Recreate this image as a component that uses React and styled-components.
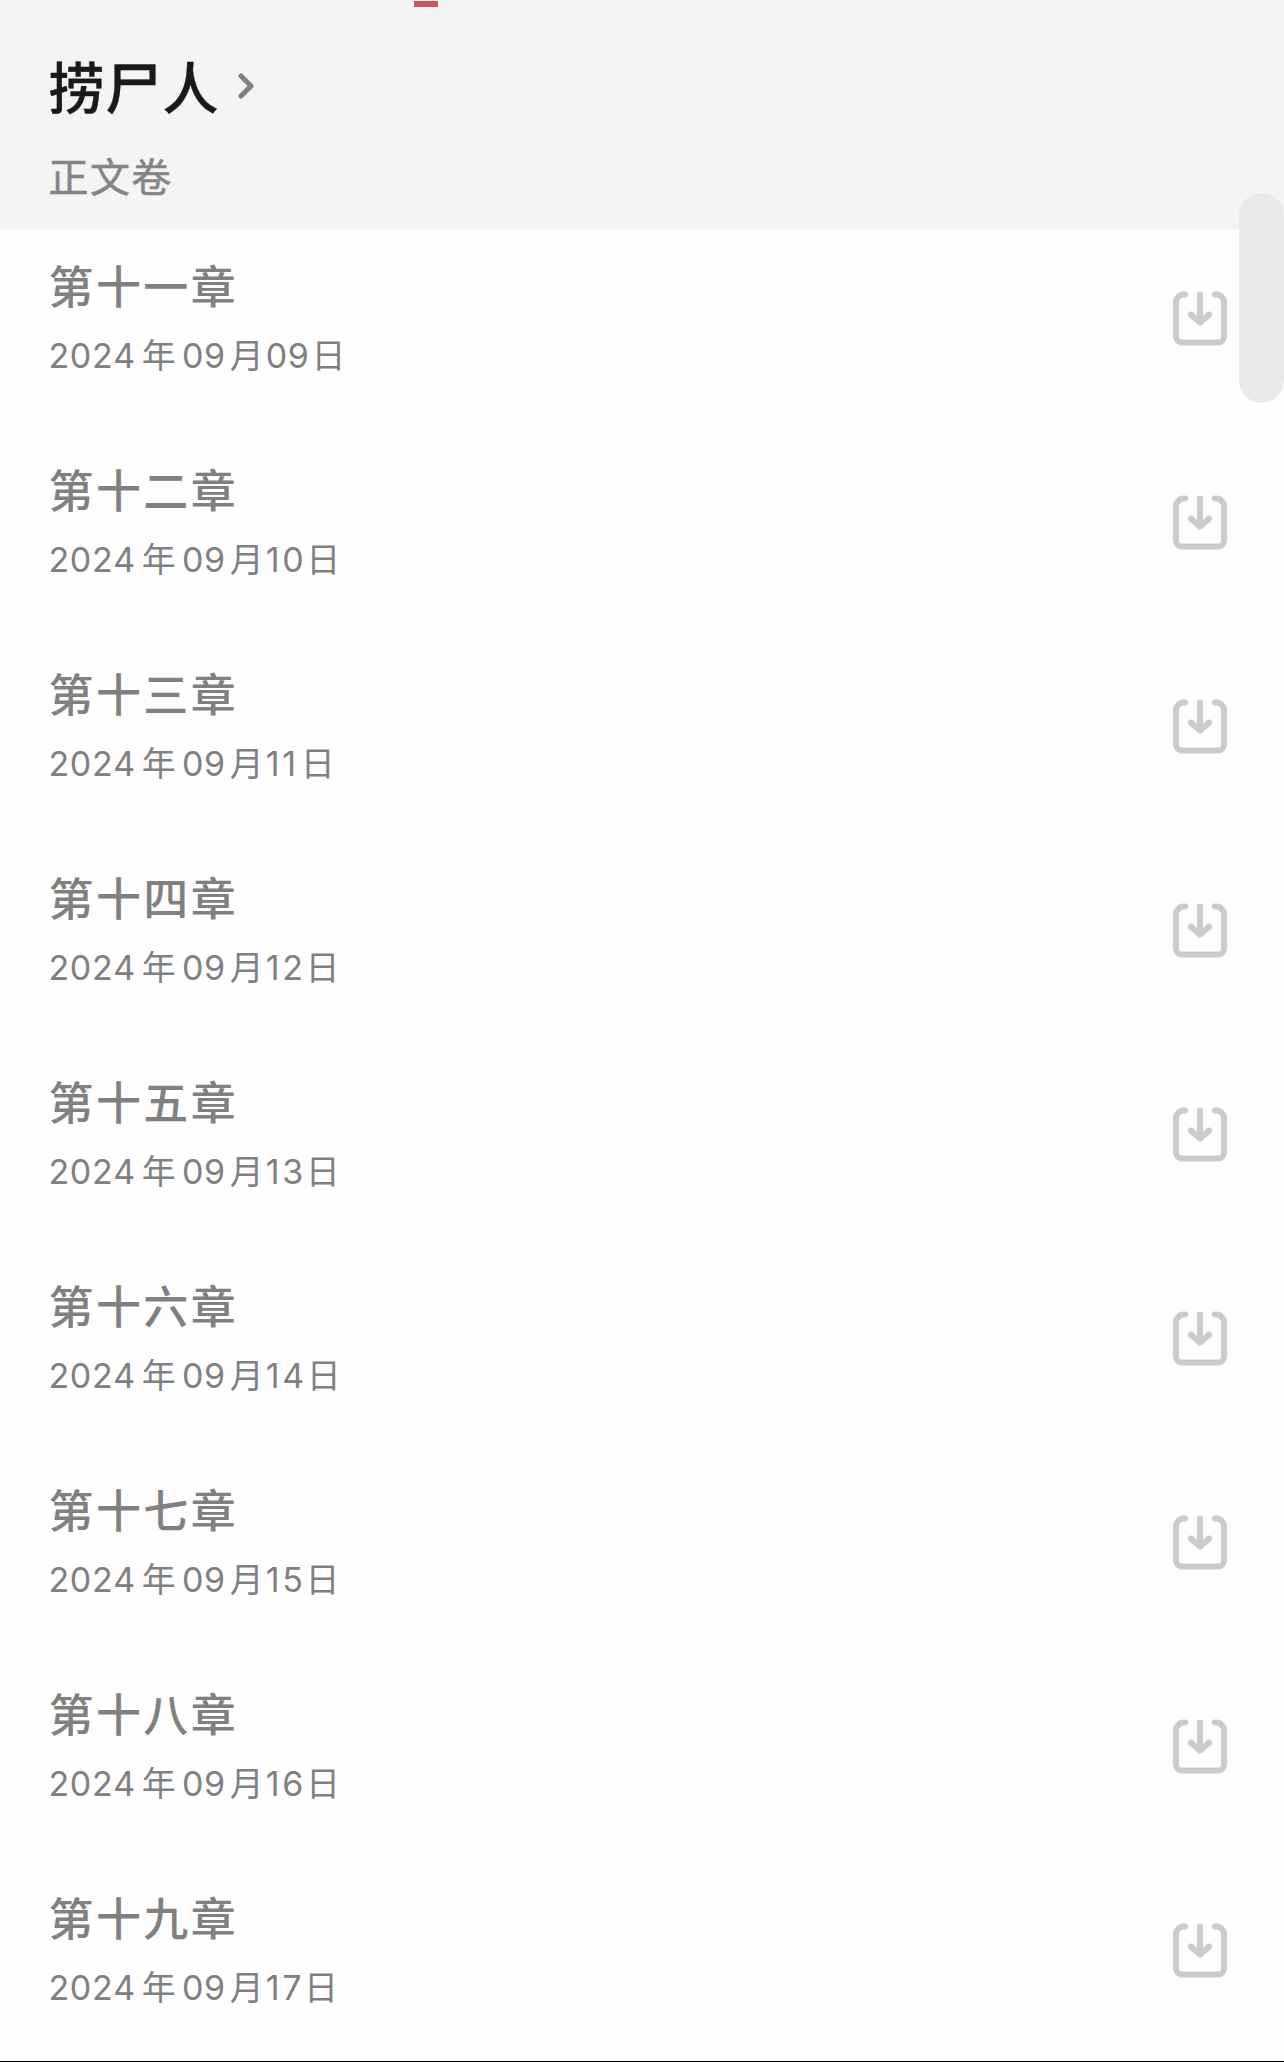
import * as React from 'react';
import styled, { createGlobalStyle } from 'styled-components';

const GlobalStyle = createGlobalStyle`
  * {
    box-sizing: border-box;
  }
  body {
    margin: 0;
    background: #fefefe;
    font-family: Inter, 'Noto Sans CJK SC', sans-serif;
  }
`;

const Page = styled.main`
  position: relative;
  height: 2062px;
  overflow: hidden;
  border-bottom: 1px solid #000;
`;

const Header = styled.header`
  height: 229px;
  padding: 1px 48.5px 0;
  background: #f4f4f4;
`;

const Marker = styled.div`
  width: 24px;
  height: 6px;
  margin-left: 365.5px;
  background: #c9565a;
`;

const BookLink = styled.div`
  display: flex;
  align-items: center;
  height: 80px;
  margin-top: 38px;
  color: #808080;
`;

const BookTitle = styled.h1`
  margin: 0;
  color: #191919;
  font-family: 'Noto Sans CJK SC', sans-serif;
  font-size: 56px;
  font-weight: 500;
  line-height: 80px;
  letter-spacing: 1px;
  -webkit-text-stroke: 0.4px currentColor;
`;

const Chevron = styled.svg`
  display: block;
  width: 16px;
  height: 26px;
  margin: 1px 0 0 18.5px;
`;

const Volume = styled.h2`
  margin: 21px 0 0;
  color: #858585;
  font-family: 'Noto Sans CJK SC', sans-serif;
  font-size: 40px;
  font-weight: 400;
  line-height: 58px;
  letter-spacing: 1.4px;
  -webkit-text-stroke: 0.5px currentColor;
`;

const ChapterList = styled.ul`
  margin: 0;
  padding: 0;
  list-style: none;
`;

const Chapter = styled.li`
  display: flex;
  justify-content: space-between;
  height: 204px;
  padding: 23px 55px 0 48.5px;
  color: #808080;

  &:last-child {
    height: 200px;
  }
`;

const ChapterTitle = styled.h3`
  margin: 0;
  font-family: 'Noto Sans CJK SC', sans-serif;
  font-size: 45px;
  font-weight: 500;
  line-height: 66px;
  letter-spacing: 2.4px;
`;

const ChapterDate = styled.p`
  margin: 13px 0 0;
  font-size: 34px;
  line-height: 50px;
  letter-spacing: 0.6px;
  font-kerning: none;
  white-space: nowrap;
`;

const DateUnit = styled.span`
  margin: 0 ${({ $after }) => $after}px 0 ${({ $before }) => $before}px;
`;

const Digit = styled.span`
  margin-right: ${({ $narrow }) => ($narrow ? 2 : 0)}px;
`;

const Download = styled.svg`
  display: block;
  flex-shrink: 0;
  width: 58px;
  height: 58px;
  margin-top: 37px;
`;

const ScrollThumb = styled.div`
  position: absolute;
  top: 193px;
  right: 0;
  width: 45px;
  height: 210px;
  border-radius: 22.5px;
  background: #e9e9e9;
`;

const chapters = [
  { title: '第十一章', day: '09' },
  { title: '第十二章', day: '10' },
  { title: '第十三章', day: '11' },
  { title: '第十四章', day: '12' },
  { title: '第十五章', day: '13' },
  { title: '第十六章', day: '14' },
  { title: '第十七章', day: '15' },
  { title: '第十八章', day: '16' },
  { title: '第十九章', day: '17' },
];

const DownloadIcon = () => (
  <Download
    viewBox="0 0 58 58"
    fill="none"
    stroke="#cbcbcb"
    strokeWidth="6"
    strokeLinecap="round"
    strokeLinejoin="round"
  >
    <path d="M14 5.5h-1a8 8 0 0 0-8 8v34a6 6 0 0 0 6 6h36a6 6 0 0 0 6-6v-34a8 8 0 0 0-8-8h-1" />
    <path d="M29 5.500v28M20 25.700l9 7.800 9-7.800" />
  </Download>
);

const App = () => (
  <>
    <GlobalStyle />
    <Page>
      <Header>
        <Marker />
        <BookLink>
          <BookTitle>捞尸人</BookTitle>
          <Chevron
            viewBox="0 0 16 26"
            fill="none"
            stroke="currentColor"
            strokeWidth="5"
            strokeLinecap="round"
            strokeLinejoin="round"
          >
            <path d="M3 3l10 10L3 23" />
          </Chevron>
        </BookLink>
        <Volume>正文卷</Volume>
      </Header>
      <ChapterList>
        {chapters.map(({ title, day }) => (
          <Chapter key={title}>
            <div>
              <ChapterTitle>{title}</ChapterTitle>
              <ChapterDate>
                2024
                <DateUnit $before={6} $after={5.5}>
                  年
                </DateUnit>
                09
                <DateUnit $before={4} $after={1.5}>
                  月
                </DateUnit>
                {day.split('').map((digit, i) => (
                  <Digit key={i} $narrow={digit === '1'}>
                    {digit}
                  </Digit>
                ))}
                <DateUnit $before={2} $after={0}>
                  日
                </DateUnit>
              </ChapterDate>
            </div>
            <DownloadIcon />
          </Chapter>
        ))}
      </ChapterList>
      <ScrollThumb />
    </Page>
  </>
);

export default App;
